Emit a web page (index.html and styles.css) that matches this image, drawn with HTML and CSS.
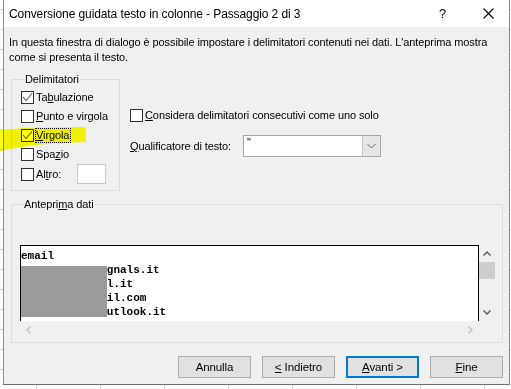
FILE: index.html
```html
<!DOCTYPE html>
<html lang="it">
<head>
  <meta charset="UTF-8" />
  <title>Conversione guidata testo in colonne</title>
  <link rel="stylesheet" href="styles.css">
</head>
<body>
  <div class="dialog">
    <div class="titlebar">
      <span class="title">Conversione guidata testo in colonne - Passaggio 2 di 3</span>
      <span class="help">?</span>
      <svg class="close" width="11" height="11" viewBox="0 0 11 11"><path d="M0.5 0.5L10.5 10.5M10.5 0.5L0.5 10.5" stroke="#000" stroke-width="1.1" fill="none"/></svg>
    </div>

    <div class="content">
      <p class="intro">In questa finestra di dialogo è possibile impostare i delimitatori contenuti nei dati. L'anteprima mostra<br>come si presenta il testo.</p>

      <div class="options">
        <fieldset class="group delim">
          <legend>Delimitatori</legend>
          <div class="check-row">
            <span class="box"><svg width="11" height="11" viewBox="0 0 11 11"><path d="M1 5l3 3.5L10 1.5" stroke="#555" stroke-width="1.1" fill="none"/></svg></span>
            <span class="lbl">Ta<u>b</u>ulazione</span>
          </div>
          <div class="check-row">
            <span class="box"></span>
            <span class="lbl"><u>P</u>unto e virgola</span>
          </div>
          <div class="check-row">
            <span class="box"><svg width="11" height="11" viewBox="0 0 11 11"><path d="M1 5l3 3.5L10 1.5" stroke="#555" stroke-width="1.1" fill="none"/></svg></span>
            <span class="lbl focus"><u>V</u>irgola</span>
          </div>
          <div class="check-row">
            <span class="box"></span>
            <span class="lbl">Spa<u>z</u>io</span>
          </div>
          <div class="check-row altro">
            <span class="box"></span>
            <span class="lbl">Al<u>t</u>ro:</span>
            <span class="altro-input"></span>
          </div>
        </fieldset>

        <div class="right-opts">
          <div class="check-row">
            <span class="box"></span>
            <span class="lbl"><u>C</u>onsidera delimitatori consecutivi come uno solo</span>
          </div>
          <div class="qual-row">
            <span class="qual-label"><u>Q</u>ualificatore di testo:</span>
            <div class="combo">
              <span class="combo-val">"</span>
              <span class="combo-btn"><svg width="9" height="6" viewBox="0 0 9 6"><path d="M0.5 1l4 4 4-4" stroke="#606060" stroke-width="1" fill="none"/></svg></span>
            </div>
          </div>
        </div>
      </div>

      <fieldset class="group preview-group">
        <legend>Antepri<u>m</u>a dati</legend>
        <div class="preview">
          <div class="preview-text">
            <div class="line">email</div>
            <div class="line">             gnals.it</div>
            <div class="line">             l.it</div>
            <div class="line">             il.com</div>
            <div class="line">             utlook.it</div>
            <span class="redact"></span>
          </div>
          <div class="vscroll">
            <span class="sbtn"><svg width="8" height="5" viewBox="0 0 8 5"><path d="M0.5 4.5l3.5-3.5 3.5 3.5" stroke="#606060" stroke-width="1.5" fill="none"/></svg></span>
            <span class="thumb"></span>
            <span class="track"></span>
            <span class="sbtn"><svg width="8" height="5" viewBox="0 0 8 5"><path d="M0.5 0.5l3.5 3.5 3.5-3.5" stroke="#606060" stroke-width="1.5" fill="none"/></svg></span>
          </div>
          <div class="hscroll">
            <span class="sbtn"><svg width="5" height="8" viewBox="0 0 5 8"><path d="M4.5 0.5L1 4l3.5 3.5" stroke="#c2c2c2" stroke-width="1.5" fill="none"/></svg></span>
            <span class="track"></span>
            <span class="sbtn"><svg width="5" height="8" viewBox="0 0 5 8"><path d="M0.5 0.5L4 4 0.5 7.5" stroke="#c2c2c2" stroke-width="1.5" fill="none"/></svg></span>
          </div>
          <div class="corner"></div>
        </div>
      </fieldset>

      <div class="buttons">
        <button class="btn">Annulla</button>
        <button class="btn"><u>&lt;</u> Indietro</button>
        <button class="btn default"><u>A</u>vanti &gt;</button>
        <button class="btn"><u>F</u>ine</button>
      </div>
    </div>
  </div>

  <!-- evidenziatore sopra "Virgola" -->
  <svg class="highlight" width="511" height="389" viewBox="0 0 511 389">
    <polygon points="0,130 25,128 85,127 86,130 86,142 60,143 35,145 15,148 0,151" fill="#ffff00"/>
  </svg>
</body>
</html>
```

FILE: styles.css
```css
* {
  box-sizing: border-box;
}
body {
  margin: 0;
  width: 511px;
  height: 389px;
  overflow: hidden;
  position: relative;
  background-color: #fff;
  background-image:
    repeating-linear-gradient(to right, transparent 0 36px, #d4d4d4 36px 37px, transparent 37px 64px),
    repeating-linear-gradient(to bottom, transparent 0 9px, #d4d4d4 9px 10px, transparent 10px 20px);
  font-family: "Liberation Sans", Arial, sans-serif;
  font-size: 11px;
  letter-spacing: -0.1px;
  color: #000;
}
u {
  text-decoration: underline;
  text-underline-offset: 1px;
}
.dialog {
  margin-left: 3px;
  width: 507px;
  border-left: 1px solid #8a8a8a;
  border-right: 1px solid #8a8a8a;
  border-bottom: 1px solid #6e6e6e;
}
.titlebar {
  height: 27px;
  background: #fff;
  display: flex;
  align-items: center;
  padding-left: 5px;
}
.title {
  flex: 1;
  font-size: 12px;
  white-space: nowrap;
}
.help {
  width: 10px;
  margin-right: 34px;
  font-size: 13px;
}
.close {
  margin-right: 15px;
}
.content {
  height: 357px;
  background: #f0f0f0;
  padding-top: 8px;
}
.intro {
  margin: 0;
  padding-left: 5px;
  line-height: 15px;
  white-space: nowrap;
}
.options {
  display: flex;
  margin-top: 7px;
}
.group {
  margin: 0 0 0 7px;
  padding: 0;
  border: 1px solid #dcdcdc;
  min-width: 0;
}
.group legend {
  margin-left: 3px;
  padding: 0 1px;
  line-height: 15px;
}
.delim {
  width: 109px;
  padding: 1px 0 6px 9px;
}
.check-row {
  display: flex;
  align-items: center;
  height: 19px;
  white-space: nowrap;
}
.check-row.altro {
  height: 20px;
}
.box {
  width: 13px;
  height: 13px;
  border: 1px solid #333;
  background: #fff;
  display: flex;
  align-items: center;
  justify-content: center;
}
.lbl {
  margin-left: 1px;
  border: 1px dotted transparent;
  line-height: 13px;
  padding: 0 1px 0 0;
}
.lbl.focus {
  border-color: #000;
}
.altro-input {
  width: 29px;
  height: 20px;
  margin-left: 14px;
  background: #fff;
  border: 1px solid #c8c8c8;
}
.right-opts {
  margin-left: 10px;
  padding-top: 34px;
}
.qual-row {
  display: flex;
  align-items: center;
  margin-top: 10px;
}
.qual-label {
  width: 113px;
}
.combo {
  width: 138px;
  height: 22px;
  display: flex;
  background: #fff;
  border: 1px solid #a6a6a6;
}
.combo-val {
  flex: 1;
  padding-left: 3px;
  line-height: 12px;
  font-size: 11px;
}
.combo-btn {
  width: 18px;
  background: #e6e6e6;
  border-left: 1px solid #c4c4c4;
  display: flex;
  align-items: center;
  justify-content: center;
}
.preview-group {
  margin-top: 6px;
  width: 492px;
  padding: 0 0 4px 8px;
}
.preview {
  margin-top: 33px;
  display: grid;
  grid-template-columns: 459px 16px;
  grid-template-rows: 76px 17px;
}
.preview-text {
  position: relative;
  background: #fff;
  border: 1px solid #000;
  border-bottom: none;
  padding-top: 3px;
  overflow: hidden;
  font-family: "Liberation Mono", "Courier New", monospace;
  font-weight: bold;
  font-size: 11px;
  line-height: 14px;
  letter-spacing: 0;
}
.line {
  white-space: pre;
}
.redact {
  position: absolute;
  left: 0;
  top: 20px;
  width: 86px;
  height: 51px;
  background: #9b9b9b;
}
.vscroll {
  display: flex;
  flex-direction: column;
  background: #f0f0f0;
}
.sbtn {
  width: 16px;
  height: 17px;
  display: flex;
  align-items: center;
  justify-content: center;
  flex: none;
}
.thumb {
  height: 17px;
  background: #cdcdcd;
  flex: none;
}
.track {
  flex: 1;
}
.hscroll {
  display: flex;
  background: #f0f0f0;
}
.hscroll .sbtn {
  width: 17px;
}
.corner {
  background: #f0f0f0;
}
.buttons {
  display: flex;
  justify-content: flex-end;
  gap: 11px;
  margin-top: 13px;
  padding-right: 6px;
}
.btn {
  width: 73px;
  height: 22px;
  padding: 0;
  background: #e1e1e1;
  border: 1px solid #adadad;
  font-family: "Liberation Sans", Arial, sans-serif;
  font-size: 11.5px;
  letter-spacing: -0.1px;
  color: #000;
}
.btn.default {
  border: 2px solid #0078d7;
}
.highlight {
  position: absolute;
  left: 0;
  top: 0;
  pointer-events: none;
  mix-blend-mode: multiply;
}
```
